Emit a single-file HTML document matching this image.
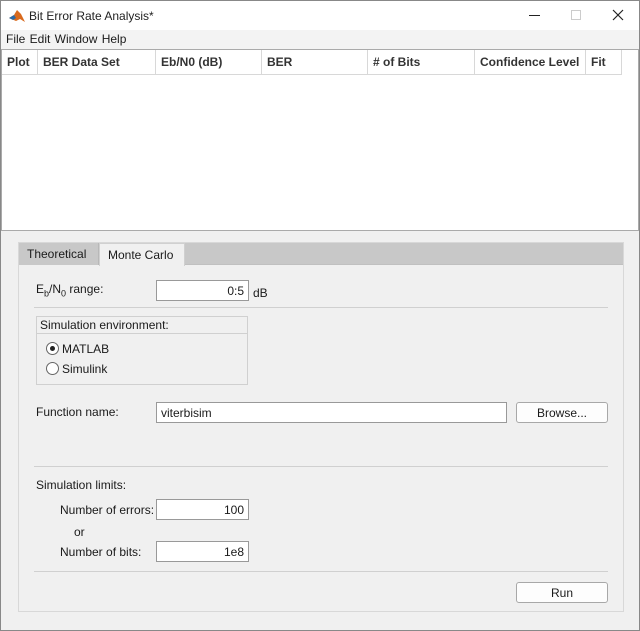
<!DOCTYPE html>
<html><head><meta charset="utf-8"><style>
*{margin:0;padding:0;box-sizing:border-box}
body{width:640px;height:631px;background:#f0f0f0;font-family:"Liberation Sans",sans-serif;font-size:12px;color:#1a1a1a;position:relative;overflow:hidden}
.a{position:absolute}
.tb{left:0;top:0;width:640px;height:30px;background:#fff;border:1px solid #888;border-bottom:none}
.menu{left:0;top:30px;width:640px;height:19px;background:#f3f3f3;border-left:1px solid #888;border-right:1px solid #888}
.table{left:1px;top:49px;width:638px;height:182px;background:#fff;border:1px solid #aaa}
.hd{top:0;height:25px;border-right:1px solid #d8d8d8;border-bottom:1px solid #d8d8d8;background:#fff;padding:5px 0 0 5px;font-weight:bold;color:#333}
.panel{left:18px;top:242px;width:606px;height:370px;border:1px solid #d8d8d8;background:#f0f0f0}
.inp{background:#fff;border:1px solid #999;height:21px;padding:3px 4px;text-align:right}
.btn{background:#fdfdfd;border:1px solid #a8a8a8;border-radius:3px;height:21px;text-align:center;padding-top:3px}
.hr{height:1px;background:#d0d0d0}
.rad{width:13px;height:13px;border:1px solid #666;border-radius:50%;background:#fff}
</style></head><body>
<div class="a tb">
<svg class="a" style="left:8px;top:8px" width="16" height="14" viewBox="0 0 16 14"><path d="M0 9 L5 6 L8 1 L12 5 L16 13 L11 10 L7 12 Z" fill="#d96a1e"/><path d="M0 9 L5 6 L7 9 L4 11Z" fill="#2a6aa8"/></svg>
<div class="a" style="left:28px;top:8px;color:#222">Bit Error Rate Analysis*</div>
<div class="a" style="left:528px;top:14px;width:11px;height:1px;background:#222"></div>
<div class="a" style="left:570px;top:9px;width:10px;height:10px;border:1px solid #ccc"></div>
<svg class="a" style="left:611px;top:8px" width="12" height="12"><path d="M1 1L11 11M11 1L1 11" stroke="#222" stroke-width="1.2"/></svg>
</div>
<div class="a menu"><div class="a" style="left:5px;top:2px;word-spacing:1px">File Edit Window Help</div></div>
<div class="a table">
<div class="a hd" style="left:0;width:36px">Plot</div>
<div class="a hd" style="left:36px;width:118px">BER Data Set</div>
<div class="a hd" style="left:154px;width:106px">Eb/N0 (dB)</div>
<div class="a hd" style="left:260px;width:106px">BER</div>
<div class="a hd" style="left:366px;width:107px">&#35; of Bits</div>
<div class="a hd" style="left:473px;width:111px">Confidence Level</div>
<div class="a hd" style="left:584px;width:36px">Fit</div>
</div>
<div class="a" style="left:0;top:0;width:1px;height:631px;background:#888"></div>
<div class="a" style="left:639px;top:0;width:1px;height:631px;background:#888"></div>
<div class="a" style="left:0;top:630px;width:640px;height:1px;background:#888"></div>
<div class="a panel">
<div class="a" style="left:0;top:0;width:604px;height:22px;background:#c8c8c8;border-bottom:1px solid #c0c0c0"></div>
<div class="a" style="left:0;top:0;width:80px;height:22px;background:#c8c8c8;border-right:1px solid #b8b8b8;padding:4px 0 0 8px">Theoretical</div>
<div class="a" style="left:80px;top:0;width:86px;height:23px;background:#f0f0f0;border:1px solid #d0d0d0;border-bottom:none;padding:4px 0 0 8px">Monte Carlo</div>
</div>
<div class="a" style="left:36px;top:282px">E<sub style="font-size:9px">b</sub>/N<sub style="font-size:9px">0</sub> range:</div>
<div class="a inp" style="left:156px;top:280px;width:93px">0:5</div>
<div class="a" style="left:253px;top:286px">dB</div>
<div class="a hr" style="left:34px;top:307px;width:574px"></div>
<div class="a" style="left:36px;top:316px;width:212px;height:69px;border:1px solid #d0d0d0"></div>
<div class="a" style="left:37px;top:317px;width:210px;height:17px;border-bottom:1px solid #d0d0d0;padding:1px 0 0 3px">Simulation environment:</div>
<div class="a rad" style="left:46px;top:342px"><div class="a" style="left:3px;top:3px;width:5px;height:5px;border-radius:50%;background:#222"></div></div>
<div class="a" style="left:62px;top:342px">MATLAB</div>
<div class="a rad" style="left:46px;top:362px"></div>
<div class="a" style="left:62px;top:362px">Simulink</div>
<div class="a" style="left:36px;top:405px">Function name:</div>
<div class="a inp" style="left:156px;top:402px;width:351px;text-align:left">viterbisim</div>
<div class="a btn" style="left:516px;top:402px;width:92px">Browse...</div>
<div class="a hr" style="left:34px;top:466px;width:574px"></div>
<div class="a" style="left:36px;top:478px">Simulation limits:</div>
<div class="a" style="left:60px;top:503px">Number of errors:</div>
<div class="a inp" style="left:156px;top:499px;width:93px">100</div>
<div class="a" style="left:74px;top:525px">or</div>
<div class="a" style="left:60px;top:545px">Number of bits:</div>
<div class="a inp" style="left:156px;top:541px;width:93px">1e8</div>
<div class="a hr" style="left:34px;top:571px;width:574px"></div>
<div class="a btn" style="left:516px;top:582px;width:92px">Run</div>
</body></html>
